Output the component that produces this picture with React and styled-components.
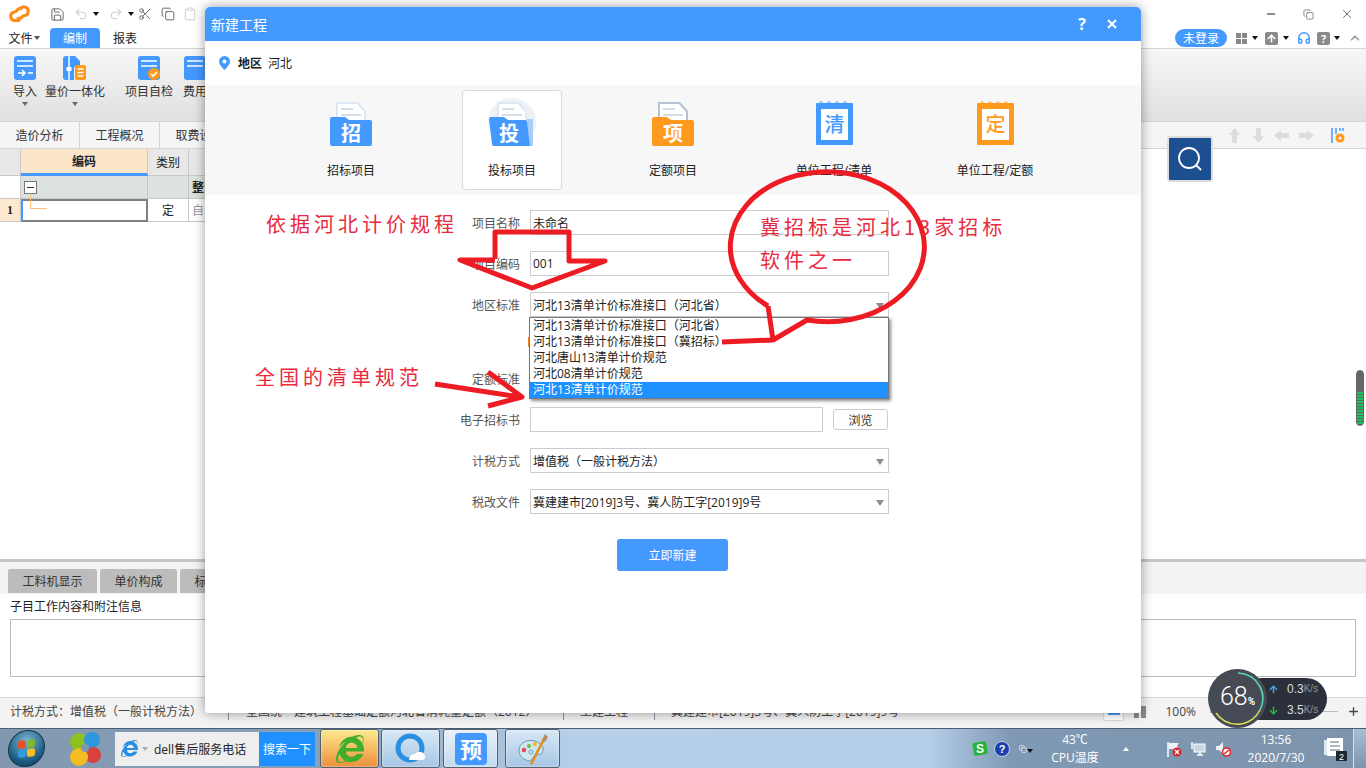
import React from 'react'
import styled, { createGlobalStyle } from 'styled-components'
import { Save, Undo2, Redo2, Scissors, Copy, Clipboard, Minus, X, ChevronUp, Headphones, ArrowUp, ArrowDown, Plus } from 'lucide-react'
import { FaInternetExplorer } from 'react-icons/fa'

const Global = createGlobalStyle`
html, body { margin: 0; padding: 0; width: 1366px; height: 768px; overflow: hidden; background: #fff; }
* { box-sizing: border-box; }
body { font-family: "Open Sans", "Noto Sans CJK SC", sans-serif; font-size: 12px; color: #222; }
`

const Shell = styled.div`
position: relative;
width: 1366px;
height: 768px;
display: flex;
flex-direction: column;
overflow: hidden;
`

const TitleBar = styled.div`
height: 28px;
display: flex;
align-items: center;
padding-left: 8px;
background: #fff;
color: #555;
`

const QuickIcon = styled.span`
display: inline-flex;
margin-left: ${p => p.$ml || 0}px;
color: ${p => p.$c || '#555'};
`

const Caret = styled.span`
display: inline-block;
width: 0;
height: 0;
margin-left: ${p => p.$ml || 0}px;
border-left: 3px solid transparent;
border-right: 3px solid transparent;
border-top: 4px solid ${p => p.$c || '#111'};
`

const CaretUp = styled(Caret)`
transform: rotate(180deg);
`

const WinButtons = styled.div`
margin-left: auto;
display: flex;
align-items: center;
gap: 26px;
padding-right: 12px;
color: #666;
`

const MenuRow = styled.div`
height: 21px;
display: flex;
align-items: stretch;
border-bottom: 1px solid #d5d5d5;
padding-left: 9px;
background: #fff;
`

const Menu = styled.div`
display: flex;
align-items: center;
justify-content: center;
white-space: nowrap;
width: ${p => p.$w}px;
margin-right: ${p => p.$mr || 0}px;
border-radius: 4px 4px 0 0;
background: ${p => (p.$on ? '#4499ff' : 'transparent')};
color: ${p => (p.$on ? '#fff' : '#222')};
`

const MenuRight = styled.div`
margin-left: auto;
display: flex;
align-items: center;
padding-right: 4px;
`

const Login = styled.div`
width: 52px;
height: 18px;
border-radius: 9px;
background: #4499ff;
color: #fff;
display: flex;
align-items: center;
justify-content: center;
margin-right: 9px;
`

const GrayTile = styled.span`
width: 13px;
height: 13px;
border-radius: 2px;
background: #8a8a8a;
color: #fff;
font-weight: 700;
font-size: 11px;
line-height: 13px;
text-align: center;
display: inline-flex;
align-items: center;
justify-content: center;
margin-left: ${p => p.$ml || 0}px;
`

const Ribbon = styled.div`
height: 73px;
display: flex;
align-items: flex-start;
padding-top: 7px;
border-bottom: 1px solid #d5d5d5;
background: linear-gradient(#f7f7f7, #e0e0e0);
`

const RibbonItem = styled.div`
width: ${p => p.$w}px;
margin-left: ${p => p.$ml}px;
display: flex;
flex-direction: column;
align-items: center;
gap: 2px;
color: #333;
white-space: nowrap;
`

const TabRow = styled.div`
height: 27px;
display: flex;
align-items: stretch;
border-bottom: 1px solid #d5d5d5;
background: #f5f5f5;
`

const DocTab = styled.div`
width: 80px;
display: flex;
align-items: center;
justify-content: center;
border-right: 1px solid #d5d5d5;
color: #333;
`

const TabTools = styled.div`
margin-left: auto;
display: flex;
align-items: center;
padding-right: 21px;
`

const MoveArrow = styled.svg`
margin-right: ${p => p.$mr}px;
`

const Gear = styled.svg`
margin-left: 3px;
`

const Main = styled.div`
height: 410px;
background: #fff;
`

const Table = styled.div`
display: grid;
grid-template-columns: 21px 127px 41px 200px;
grid-template-rows: 27px 23px 23px;
width: 389px;
`

const Cell = styled.div`
display: flex;
align-items: center;
justify-content: ${p => p.$left ? 'flex-start' : 'center'};
padding-left: ${p => p.$left ? 3 : 0}px;
background: ${p => p.$bg || '#fff'};
border-right: 1px solid #c8c8c8;
border-bottom: 1px solid #c8c8c8;
font-weight: ${p => (p.$bold ? 700 : 400)};
color: ${p => p.$c || '#222'};
`

const HeadCode = styled(Cell)`
background: #fde5c9;
border-bottom: 3px solid #4499ff;
font-weight: 700;
`

const RowNo = styled(Cell)`
background: #fde9d0;
font-family: "Liberation Serif", serif;
font-weight: 700;
`

const SelectedCell = styled.div`
position: relative;
border: 2px solid #808080;
border-left-color: #4499ff;
background: #fff;
`

const TreeLine = styled.span`
position: absolute;
left: 7px;
top: -6px;
width: 17px;
height: 14px;
border-left: 1px solid #fdbf78;
border-bottom: 1px solid #fdbf78;
`

const Collapse = styled.span`
width: 13px;
height: 13px;
border: 1px solid #777;
background: #fff;
display: inline-flex;
align-items: center;
justify-content: center;
&::after { content: ''; width: 7px; height: 1px; background: #333; }
`

const Splitter = styled.div`
height: 3px;
background: #c6c6c6;
`

const LowerTabs = styled.div`
height: 32px;
display: flex;
align-items: flex-end;
gap: 3px;
padding: 0 0 1px 8px;
background: #f3f3f3;
`

const LowerTab = styled.div`
width: ${p => p.$w}px;
height: 24px;
border-radius: 2px 2px 0 0;
background: #bcbcbc;
color: #333;
display: flex;
align-items: center;
justify-content: center;
`

const Lower = styled.div`
height: 103px;
padding: 5px 10px 0;
background: #fff;
`

const LowerLabel = styled.div`
height: 20px;
line-height: 15px;
`

const NoteBox = styled.div`
height: 58px;
border: 1px solid #bbb;
`

const Status = styled.div`
height: 31px;
display: flex;
align-items: center;
border-top: 1px solid #d5d5d5;
padding-bottom: 3px;
background: #f3f3f3;
color: #444;
white-space: nowrap;
`

const StatusCell = styled.div`
width: ${p => p.$w}px;
padding-left: ${p => p.$pl}px;
height: 16px;
line-height: 16px;
border-right: ${p => (p.$last ? 0 : '1px solid #8c98a6')};
`

const StatusRight = styled.div`
margin-left: auto;
display: flex;
align-items: center;
padding-right: 6px;
`

const ViewBtn = styled.div`
width: 21px;
height: 18px;
background: #fff;
border: 1px solid #d8d8d8;
border-radius: 2px;
display: flex;
align-items: center;
justify-content: center;
&::after { content: ''; width: 12px; height: 6px; background: #4499ff; border-radius: 1px; }
`

const ColsIcon = styled.svg`
margin: 0 18px 0 10px;
`

const ZoomMinus = styled(Minus)`
margin-left: 12px;
`

const ZoomLine = styled.div`
width: 108px;
height: 1px;
margin: 0 9px 0 10px;
background: #bbb;
`

const Taskbar = styled.div`
height: 40px;
display: flex;
align-items: center;
border-top: 1px solid #4a5d72;
background: linear-gradient(90deg, #8198b0 0, #86a0ba 23%, #b6d0ea 42%, #b5cfe9 68%, #7f99b4 74%, #7d94ac 100%);
`

const Orb = styled.div`
width: 37px;
height: 37px;
margin-left: 8px;
border-radius: 50%;
border: 1px solid #16384f;
background: radial-gradient(circle at 50% 30%, #7fb6d6, #1b5d83 65%, #0e3048);
display: grid;
grid-template-columns: 8px 8px;
grid-template-rows: 8px 8px;
gap: 1px;
justify-content: center;
align-content: center;
transform: skewY(-6deg);
`

const OrbPane = styled.span`
background: ${p => p.$c};
border-radius: 2px;
`

const SearchBar = styled.div`
width: 200px;
height: 34px;
margin-left: 14px;
display: flex;
align-items: center;
background: #eeeeee;
color: #222;
`

const SearchBtn = styled.div`
margin-left: auto;
width: 56px;
height: 100%;
background: #1e90ff;
color: #fff;
display: flex;
align-items: center;
justify-content: center;
`

const TaskBtn = styled.div`
width: ${p => p.$w}px;
height: 39px;
margin-left: ${p => p.$ml}px;
border: 1px solid #51606f;
border-radius: 3px;
display: flex;
align-items: center;
justify-content: center;
background: ${p => p.$bg};
box-shadow: inset 0 0 2px #fff;
`

const Tray = styled.div`
margin-left: auto;
display: flex;
align-items: center;
height: 100%;
color: #fff;
`

const TrayText = styled.div`
width: ${p => p.$w}px;
margin-left: ${p => p.$ml}px;
text-align: center;
line-height: 18px;
white-space: nowrap;
`

const TraySlot = styled.span`
display: inline-flex;
margin-left: ${p => p.$ml}px;
`

const ShowDesktop = styled.div`
width: 13px;
height: 100%;
margin-left: 6px;
background: linear-gradient(#a9bfd4, #7d94ac);
border-left: 1px solid #d5e0ea;
`

const Modal = styled.div`
position: absolute;
left: 205px;
top: 7px;
width: 936px;
height: 706px;
background: #fff;
border-radius: 5px 5px 3px 3px;
box-shadow: 0 0 12px rgba(0, 0, 0, .4);
display: flex;
flex-direction: column;
`

const ModalHead = styled.div`
height: 34px;
flex: none;
display: flex;
align-items: center;
padding: 0 22px 0 6px;
background: #4499ff;
border-radius: 5px 5px 0 0;
color: #fff;
font-size: 14px;
`

const HeadTools = styled.div`
margin-left: auto;
display: flex;
align-items: center;
gap: 19px;
font-size: 16px;
font-weight: 700;
`

const Location = styled.div`
height: 44px;
flex: none;
display: flex;
align-items: center;
padding-left: 14px;
gap: 6px;
`

const Bold = styled.b`
margin-left: 2px;
font-weight: 700;
`

const Band = styled.div`
height: 110px;
flex: none;
display: flex;
justify-content: center;
align-items: center;
gap: 61px;
background: #f7f7f7;
`

const TypeCard = styled.div`
width: 100px;
height: 100px;
padding-top: 7px;
display: flex;
flex-direction: column;
align-items: center;
gap: 14px;
line-height: 17px;
white-space: nowrap;
border: 1px solid ${p => (p.$on ? '#d5dbe0' : 'transparent')};
border-radius: 3px;
background: ${p => (p.$on ? '#fff' : 'transparent')};
`

const Form = styled.div`
position: relative;
padding: 15px 0 0 225px;
display: flex;
flex-direction: column;
gap: 16px;
`

const Row = styled.div`
display: flex;
align-items: center;
height: ${p => p.$h || 25}px;
`

const Label = styled.div`
width: 90px;
margin-right: 10px;
text-align: right;
color: #555;
`

const Field = styled.div`
position: relative;
width: ${p => p.$w || 359}px;
height: 25px;
padding-left: 2px;
display: flex;
align-items: center;
border: 1px solid #ccc;
color: #222;
background: #fff;
white-space: nowrap;
`

const SelectArrow = styled.span`
position: absolute;
right: 4px;
top: 10px;
border-left: 4px solid transparent;
border-right: 4px solid transparent;
border-top: 6px solid #8c8c8c;
`

const HintMark = styled.div`
width: 2px;
height: 10px;
margin-left: 98px;
background: #f08c1e;
`

const Browse = styled.div`
width: 55px;
height: 21px;
margin-left: 10px;
border: 1px solid #ccc;
border-radius: 3px;
display: flex;
align-items: center;
justify-content: center;
color: #333;
`

const Dropdown = styled.div`
position: absolute;
left: 324px;
top: 122px;
width: 360px;
height: 82px;
background: #fff;
border: 1px solid #777;
box-shadow: 2px 2px 3px rgba(0, 0, 0, .45);
`

const Option = styled.div`
height: 16px;
line-height: 16px;
padding-left: 3px;
white-space: nowrap;
background: ${p => (p.$on ? '#1e90ff' : 'transparent')};
color: ${p => (p.$on ? '#fff' : '#222')};
`

const Submit = styled.div`
width: 111px;
height: 32px;
margin: 9px 0 0 187px;
border-radius: 3px;
background: #4499ff;
color: #fff;
display: flex;
align-items: center;
justify-content: center;
`

const Finder = styled.div`
position: absolute;
left: 1167px;
top: 136px;
width: 46px;
height: 46px;
border: 2px solid #dcdcdc;
border-radius: 3px;
background: #1c4f8f;
display: flex;
align-items: center;
justify-content: center;
`

const Meter = styled.div`
position: absolute;
left: 1356px;
top: 370px;
width: 8px;
height: 56px;
border-radius: 4px;
background: linear-gradient(#666 0 20px, transparent 20px), repeating-linear-gradient(#19c45a 0 2px, #666 2px 3px);
border: 1px solid #666;
`

const Speed = styled.div`
position: absolute;
left: 1240px;
top: 678px;
width: 87px;
height: 42px;
padding: 5px 0 0 28px;
border-radius: 21px;
background: #2c303a;
color: #d8dde2;
font-size: 12px;
display: flex;
flex-direction: column;
gap: 9px;
`

const SpeedRow = styled.div`
height: 12px;
line-height: 12px;
display: flex;
align-items: center;
white-space: nowrap;
font-family: "Liberation Sans", sans-serif;
`

const SpeedIcon = styled.span`
display: inline-flex;
width: 19px;
color: ${p => p.$c};
`

const SpeedUnit = styled.span`
color: #8e949c;
font-size: 10px;
`

const Gauge = styled.div`
position: absolute;
left: 1208px;
top: 669px;
width: 59px;
height: 59px;
border-radius: 50%;
background: #464a55;
color: #fff;
display: flex;
align-items: baseline;
justify-content: center;
padding-top: 13px;
font-family: Roboto, sans-serif;
font-size: 25px;
font-weight: 300;
line-height: 30px;
`

const GaugeRing = styled.svg`
position: absolute;
left: 0;
top: 0;
`

const Pct = styled.span`
font-size: 10px;
font-weight: 700;
`

const Ink = styled.svg`
position: absolute;
left: 0;
top: 0;
pointer-events: none;
`

const Note = styled.div`
position: absolute;
left: ${p => p.$x}px;
top: ${p => p.$y}px;
font-family: "Noto Sans CJK SC", sans-serif;
color: #ea2a3e;
font-size: 20px;
font-weight: 400;
line-height: 24px;
letter-spacing: 4px;
white-space: nowrap;
`

const RibbonDoc = ({ badge }) => (
  <svg width="24" height="24" viewBox="0 0 24 24">
    <rect x="1" y="0" width="22" height="24" rx="3" fill="#4499ff" />
    <path d="M4 5h16M4 10h16" stroke="#fff" strokeWidth="1.6" />
    {badge === 'arrow' && <path d="M5 17h7m-3-3 3 3-3 3M15 17h5" stroke="#fff" strokeWidth="1.6" fill="none" />}
    {badge === 'check' && (
      <g>
        <circle cx="17" cy="18" r="6" fill="#ff9a1f" />
        <path d="M14 18l2 2 4-4" stroke="#fff" strokeWidth="1.6" fill="none" />
      </g>
    )}
  </svg>
)

const RibbonLink = () => (
  <svg width="24" height="24" viewBox="0 0 24 24">
    <path d="M0 3q0-3 3-3h9l5 5v6H11v13H3q-3 0-3-3z" fill="#4499ff" />
    <path d="M6 0v24" stroke="#fff" strokeWidth="1.4" />
    <rect x="3.5" y="11" width="5" height="4" fill="#fff" />
    <rect x="12" y="9" width="11" height="15" rx="2" fill="#ff9a1f" />
    <path d="M14.5 13h6M14.5 16.500h6M14.500 20h6" stroke="#fff" strokeWidth="1.500" />
  </svg>
)

const TypeFolder = ({ color, back, ch, tilted }) => (
  <svg width="52" height="50" viewBox="0 0 52 50">
    {tilted && <circle cx="26" cy="24" r="24" fill="#eef1f5" />}
    <path d="M11 4h22l8 9v20H11z" fill={back === 'dark' ? '#b4c2d4' : '#dfe8f4'} />
    <path d="M13 6h19l7 8v19H13z" fill="#fff" />
    <path d="M16 11h12M16 17h20" stroke="#d3deeb" strokeWidth="2" />
    {tilted ? (
      <g>
        <path d="M41 21h6v27h-8z" fill="#a9cdfb" />
        <path d="M8 48q-2 0-2-2L3 21q0-2 2-2h13l4 3h17q2 0 2 2l3 24z" fill={color} />
      </g>
    ) : (
      <path d="M7 48q-2 0-2-2V21q0-2 2-2h13l4 3h21q2 0 2 2v22q0 2-2 2z" fill={color} />
    )}
    <text x={tilted ? 23 : 26} y="43" textAnchor="middle" fontSize="20" fontWeight="700" fill="#fff" fontFamily="Noto Sans CJK SC">{ch}</text>
  </svg>
)

const TypeBook = ({ color, ch }) => (
  <svg width="52" height="50" viewBox="0 0 52 50">
    <rect x="8" y="5" width="37" height="42" rx="1" fill={color} />
    {[13, 21, 29, 37].map(x => <circle key={x} cx={x} cy="5" r="2" fill={color} opacity=".5" />)}
    <rect x="13" y="11" width="27" height="31" fill="#fff" />
    <text x="26.500" y="34" textAnchor="middle" fontSize="20" fontWeight="500" fill={color} fontFamily="Noto Sans CJK SC">{ch}</text>
  </svg>
)

const Logo = () => (
  <svg width="23" height="18" viewBox="0 0 23 18" fill="none" stroke="#ff8c1a" strokeWidth="3.200" strokeLinecap="round">
    <path d="M13 3.500C10 2 9 7 6.500 7c-5 0-5 8.500 0 8.500H11" />
    <path d="M10 13.500c3 1.500 4-3 6.500-3 5 0 5-8.500 0-8.500H14" />
  </svg>
)

const Palette = () => (
  <svg width="34" height="32" viewBox="0 0 34 32">
    <path d="M3 17c0-7 8-11 16-9 7 2 10 8 7 12-2 3-6 0-8 3-2 4-4 6-8 4-5-2-7-5-7-10z" fill="#cfe5f0" stroke="#6a9cb5" />
    <circle cx="8" cy="17" r="2.200" fill="#e5484d" />
    <circle cx="13" cy="13" r="2" fill="#6dbb45" />
    <circle cx="19" cy="11" r="2" fill="#f5b51e" />
    <circle cx="15" cy="19" r="2" fill="none" stroke="#5d9fc7" />
    <path d="M15 31 28 6" stroke="#e58a1f" strokeWidth="2.500" />
    <path d="M26 7l3-6 3 3-3 5z" fill="#b58d5f" />
  </svg>
)

const ColorOrb = () => (
  <svg width="32" height="36" viewBox="0 0 32 36">
    <circle cx="10" cy="11" r="9" fill="#8cc21f" />
    <circle cx="23" cy="9" r="8" fill="#2f95dc" />
    <circle cx="24" cy="24" r="8" fill="#d8413d" />
    <circle cx="10" cy="26" r="9" fill="#f4be22" />
    <circle cx="16" cy="17" r="4" fill="#8198b0" />
  </svg>
)

const Flag = () => (
  <svg width="16" height="16" viewBox="0 0 16 16">
    <path d="M2 1v15" stroke="#fff" strokeWidth="1.500" />
    <path d="M3 2h10l-2 3 2 3H3z" fill="#eef2f6" />
    <circle cx="11" cy="11" r="4.500" fill="#d9282f" />
    <path d="m9 9 4 4m0-4-4 4" stroke="#fff" strokeWidth="1.300" />
  </svg>
)

const Net = () => (
  <svg width="16" height="16" viewBox="0 0 16 16">
    <rect x="4" y="3" width="11" height="8" fill="#c8d6e3" stroke="#fff" />
    <path d="M7 14h6M10 11v3M2 1v7" stroke="#fff" strokeWidth="1.500" />
  </svg>
)

const Speaker = () => (
  <svg width="16" height="16" viewBox="0 0 16 16">
    <path d="M1 5h3l4-4v12L4 9H1z" fill="#eef2f6" />
    <circle cx="11.500" cy="11" r="4" fill="#fff" stroke="#d9282f" strokeWidth="1.600" />
    <path d="m9 13 5-4" stroke="#d9282f" strokeWidth="1.600" />
  </svg>
)

const HelpOrb = () => (
  <svg width="16" height="16" viewBox="0 0 16 16">
    <circle cx="8" cy="8" r="7.500" fill="#1a3fae" stroke="#c8d0da" />
    <text x="8" y="12" textAnchor="middle" fontSize="11" fontWeight="700" fill="#fff" fontFamily="Liberation Sans">?</text>
  </svg>
)

const Sogou = () => (
  <svg width="16" height="15" viewBox="0 0 16 15">
    <rect x="1" y="1" width="14" height="13" rx="2" fill="#23b53a" transform="rotate(-10 8 7)" />
    <text x="8" y="12" textAnchor="middle" fontSize="12" fontWeight="700" fill="#fff" fontFamily="Liberation Sans">S</text>
  </svg>
)

const Notify = () => (
  <svg width="24" height="24" viewBox="0 0 24 24">
    <rect x="1" y="3" width="4" height="15" fill="#dfe7ef" />
    <rect x="4" y="1" width="16" height="18" fill="#fff" />
    <path d="M7 5h9M7 9h10M7 13h10" stroke="#5b7188" strokeWidth="1.200" />
    <rect x="13" y="14" width="11" height="10" fill="#1f2730" />
    <text x="18.500" y="23" textAnchor="middle" fontSize="9" fill="#fff" fontFamily="Liberation Sans">2</text>
  </svg>
)

const options = ['河北13清单计价标准接口（河北省）', '河北13清单计价标准接口（冀招标）', '河北唐山13清单计价规范', '河北08清单计价规范', '河北13清单计价规范']

const App = () => (
  <Shell>
    <Global />
    <TitleBar>
      <Logo />
      <QuickIcon $ml={19}><Save size={15} strokeWidth={1.400} /></QuickIcon>
      <QuickIcon $ml={9} $c="#d0d0d0"><Undo2 size={14} /></QuickIcon>
      <Caret $ml={5} />
      <QuickIcon $ml={10} $c="#d0d0d0"><Redo2 size={14} /></QuickIcon>
      <Caret $ml={5} />
      <QuickIcon $ml={4}><Scissors size={14} strokeWidth={1.500} /></QuickIcon>
      <QuickIcon $ml={9}><Copy size={14} strokeWidth={1.500} /></QuickIcon>
      <QuickIcon $ml={8} $c="#d5d5d5"><Clipboard size={14} /></QuickIcon>
      <WinButtons>
        <Minus size={12} strokeWidth={3} />
        <Copy size={11} strokeWidth={1.600} />
        <X size={14} strokeWidth={1.600} />
      </WinButtons>
    </TitleBar>
    <MenuRow>
      <Menu $w={30} $mr={11}>文件<Caret $ml={1} $c="#555" /></Menu>
      <Menu $w={50} $mr={13} $on>编制</Menu>
      <Menu $w={24}>报表</Menu>
      <MenuRight>
        <Login>未登录</Login>
        <svg width="11" height="11" viewBox="0 0 11 11"><path d="M0 0h5v5H0zM6 0h5v5H6zM0 6h5v5H0zM6 6h5v5H6z" fill="#888" /></svg>
        <Caret $ml={5} />
        <GrayTile $ml={7}><ArrowUp size={11} strokeWidth={3.500} /></GrayTile>
        <Caret $ml={5} />
        <QuickIcon $ml={8} $c="#4499ff"><Headphones size={14} strokeWidth={2.500} /></QuickIcon>
        <GrayTile $ml={6}>?</GrayTile>
        <Caret $ml={4} />
        <QuickIcon $ml={8} $c="#999"><ChevronUp size={14} strokeWidth={2.500} /></QuickIcon>
      </MenuRight>
    </MenuRow>
    <Ribbon>
      <RibbonItem $w={24} $ml={13}>
        <RibbonDoc badge="arrow" />
        <span>导入</span>
        <Caret $ml={0} $c="#666" />
      </RibbonItem>
      <RibbonItem $w={60} $ml={8}>
        <RibbonLink />
        <span>量价一体化</span>
        <Caret $ml={0} $c="#666" />
      </RibbonItem>
      <RibbonItem $w={48} $ml={20}>
        <RibbonDoc badge="check" />
        <span>项目自检</span>
      </RibbonItem>
      <RibbonItem $w={24} $ml={10}>
        <RibbonDoc />
        <span>费用</span>
      </RibbonItem>
    </Ribbon>
    <TabRow>
      <DocTab>造价分析</DocTab>
      <DocTab>工程概况</DocTab>
      <DocTab>取费设置</DocTab>
      <TabTools>
        <MoveArrow $mr={13} width="11" height="15" viewBox="0 0 11 15"><path d="M5.500 0 11 7H8v8H3V7H0z" fill="#dcdcdc" /></MoveArrow>
        <MoveArrow $mr={10} width="11" height="15" viewBox="0 0 11 15"><path d="M5.500 15 11 8H8V0H3v8H0z" fill="#dcdcdc" /></MoveArrow>
        <MoveArrow $mr={10} width="15" height="11" viewBox="0 0 15 11"><path d="M0 5.500 7 0v3h8v5H7v3z" fill="#dcdcdc" /></MoveArrow>
        <MoveArrow $mr={14} width="15" height="11" viewBox="0 0 15 11"><path d="M15 5.500 8 0v3H0v5h8v3z" fill="#dcdcdc" /></MoveArrow>
        <Gear width="14" height="15" viewBox="0 0 14 15">
          <path d="M1 0v15M5 0v6M9 0v3M12 0v3" stroke="#4499ff" strokeWidth="1.500" />
          <circle cx="9" cy="10" r="4.500" fill="#ff9a1f" />
          <circle cx="9" cy="10" r="1.500" fill="#fff" />
        </Gear>
      </TabTools>
    </TabRow>
    <Main>
      <Table>
        <Cell $bg="#e8e8e8" />
        <HeadCode>编码</HeadCode>
        <Cell $bg="#e8e8e8">类别</Cell>
        <Cell $bg="#e8e8e8">名称</Cell>
        <Cell />
        <Cell $bg="#dce3de" $left><Collapse /></Cell>
        <Cell $bg="#dce3de" />
        <Cell $bg="#dce3de" $left $bold>整个项目</Cell>
        <RowNo>1</RowNo>
        <SelectedCell><TreeLine /></SelectedCell>
        <Cell>定</Cell>
        <Cell $left $c="#999">自动提示</Cell>
      </Table>
    </Main>
    <Splitter />
    <LowerTabs>
      <LowerTab $w={89}>工料机显示</LowerTab>
      <LowerTab $w={77}>单价构成</LowerTab>
      <LowerTab $w={77}>标准换算</LowerTab>
    </LowerTabs>
    <Lower>
      <LowerLabel>子目工作内容和附注信息</LowerLabel>
      <NoteBox />
    </Lower>
    <Status>
      <StatusCell $w={229} $pl={10}>计税方式：增值税（一般计税方法）</StatusCell>
      <StatusCell $w={335} $pl={17}>全国统一建筑工程基础定额河北省消耗量定额（2012）</StatusCell>
      <StatusCell $w={91} $pl={16}>土建工程</StatusCell>
      <StatusCell $w={260} $pl={16} $last>冀建建市[2019]3号、冀人防工字[2019]9号</StatusCell>
      <StatusRight>
        <ViewBtn />
        <ColsIcon width="13" height="12" viewBox="0 0 13 12"><path d="M0 4h5v8H0zM7 0h5v12H7z" fill="#8a8a8a" /></ColsIcon>
        <span>100%</span>
        <ZoomMinus size={12} />
        <ZoomLine />
        <Plus size={13} strokeWidth={2.500} />
      </StatusRight>
    </Status>
    <Taskbar>
      <Orb>
        <OrbPane $c="#e8502a" />
        <OrbPane $c="#7fba2c" />
        <OrbPane $c="#2f9ae0" />
        <OrbPane $c="#f5bf22" />
      </Orb>
      <TraySlot $ml={24}><ColorOrb /></TraySlot>
      <SearchBar>
        <TraySlot $ml={6}><FaInternetExplorer size={17} color="#2a8fe0" /></TraySlot>
        <TraySlot $ml={4}><Caret $c="#aaa" /></TraySlot>
        <TraySlot $ml={6}>dell售后服务电话</TraySlot>
        <SearchBtn>搜索一下</SearchBtn>
      </SearchBar>
      <TaskBtn $w={59} $ml={5} $bg="linear-gradient(#fbe98d, #ee8f3c)"><FaInternetExplorer size={28} color="#3fae2a" /></TaskBtn>
      <TaskBtn $w={59} $ml={2} $bg="linear-gradient(#d8e8f6, #a7c6e4)">
        <svg width="32" height="32" viewBox="0 0 32 32"><circle cx="15" cy="15" r="12" fill="none" stroke="#2a8fe0" strokeWidth="5" /><path d="M14 27q0-6 6-6 2-3 6-2 4 1 4 5 0 3-3 3z" fill="#fff" /></svg>
      </TaskBtn>
      <TaskBtn $w={55} $ml={3} $bg="linear-gradient(#e8f1fa, #c4d9ee)">
        <svg width="32" height="32" viewBox="0 0 32 32"><rect width="32" height="32" rx="4" fill="#4499ff" /><text x="16" y="25" textAnchor="middle" fontSize="22" fontWeight="700" fill="#fff" fontFamily="Noto Sans CJK SC">预</text></svg>
      </TaskBtn>
      <TaskBtn $w={55} $ml={7} $bg="linear-gradient(#d8e8f6, #a7c6e4)"><Palette /></TaskBtn>
      <Tray>
        <Sogou />
        <TraySlot $ml={6}><HelpOrb /></TraySlot>
        <TrayText $w={14} $ml={9}>
          <Copy size={8} />
          <Caret />
        </TrayText>
        <TrayText $w={60} $ml={12}>43℃<br />CPU温度</TrayText>
        <TraySlot $ml={18}><CaretUp $c="#fff" /></TraySlot>
        <TraySlot $ml={37}><Flag /></TraySlot>
        <TraySlot $ml={8}><Net /></TraySlot>
        <TraySlot $ml={9}><Speaker /></TraySlot>
        <TrayText $w={70} $ml={10}>13:56<br />2020/7/30</TrayText>
        <TraySlot $ml={12}><Notify /></TraySlot>
        <ShowDesktop />
      </Tray>
    </Taskbar>

    <Finder>
      <svg width="30" height="30" viewBox="0 0 30 30" fill="none" stroke="#fff" strokeWidth="1.800">
        <circle cx="14" cy="14" r="10" />
        <path d="m21 21 5 5" />
      </svg>
    </Finder>
    <Meter />

    <Modal>
      <ModalHead>
        新建工程
        <HeadTools>
          <span>?</span>
          <X size={14} strokeWidth={3.500} />
        </HeadTools>
      </ModalHead>
      <Location>
        <svg width="11" height="14" viewBox="0 0 11 14"><path d="M5.500 0a5.500 5.500 0 0 1 5.500 5.500C11 9 5.500 14 5.500 14S0 9 0 5.500A5.500 5.500 0 0 1 5.500 0z" fill="#4499ff" /><circle cx="5.500" cy="5.500" r="2" fill="#fff" /></svg>
        <Bold>地区</Bold>
        <span>河北</span>
      </Location>
      <Band>
        <TypeCard><TypeFolder color="#4499ff" ch="招" /><span>招标项目</span></TypeCard>
        <TypeCard $on><TypeFolder color="#4499ff" ch="投" tilted /><span>投标项目</span></TypeCard>
        <TypeCard><TypeFolder color="#ff9a1f" back="dark" ch="项" /><span>定额项目</span></TypeCard>
        <TypeCard><TypeBook color="#4499ff" ch="清" /><span>单位工程/清单</span></TypeCard>
        <TypeCard><TypeBook color="#ff9a1f" ch="定" /><span>单位工程/定额</span></TypeCard>
      </Band>
      <Form>
        <Row><Label>项目名称</Label><Field>未命名</Field></Row>
        <Row><Label>项目编码</Label><Field>001</Field></Row>
        <Row><Label>地区标准</Label><Field>河北13清单计价标准接口（河北省）<SelectArrow /></Field></Row>
        <Row $h={17}><HintMark /></Row>
        <Row><Label>定额标准</Label><Field><SelectArrow /></Field></Row>
        <Row><Label>电子招标书</Label><Field $w={293} /><Browse>浏览</Browse></Row>
        <Row><Label>计税方式</Label><Field>增值税（一般计税方法）<SelectArrow /></Field></Row>
        <Row><Label>税改文件</Label><Field>冀建建市[2019]3号、冀人防工字[2019]9号<SelectArrow /></Field></Row>
        <Submit>立即新建</Submit>
        <Dropdown>
          {options.map((o, i) => <Option key={o} $on={i === 4}>{o}</Option>)}
        </Dropdown>
      </Form>
    </Modal>

    <Speed>
      <SpeedRow><SpeedIcon $c="#4aa8e8"><ArrowUp size={11} strokeWidth={3} /></SpeedIcon>0.3<SpeedUnit>K/s</SpeedUnit></SpeedRow>
      <SpeedRow><SpeedIcon $c="#2fb84a"><ArrowDown size={11} strokeWidth={3} /></SpeedIcon>3.5<SpeedUnit>K/s</SpeedUnit></SpeedRow>
    </Speed>
    <Gauge>
      <GaugeRing width="59" height="59" viewBox="0 0 59 59" fill="none" strokeWidth="1.600">
        <path d="M30 4A25.500 25.500 0 0 1 52 41" stroke="#58d6b0" />
        <path d="M52 41A25.500 25.500 0 0 1 8 44" stroke="#d8d85a" />
      </GaugeRing>
      68<Pct>%</Pct>
    </Gauge>

    <Ink width="1366" height="768" viewBox="0 0 1366 768" fill="none" stroke="#ed1c24" strokeWidth="5" strokeLinejoin="round">
      <path d="M495 259V232H569V261H605L532 288L460 260H495" />
      <path d="M435 384L520 397M488 372L522 397L488 406" />
      <path d="M768 306A97 75 0 1 1 807 320L773 340L768 306M722 342L773 340" />
    </Ink>
    <Note $x={266} $y={212}>依据河北计价规程</Note>
    <Note $x={255} $y={365}>全国的清单规范</Note>
    <Note $x={760} $y={215}>冀招标是河北13家招标</Note>
    <Note $x={760} $y={248}>软件之一</Note>
  </Shell>
)

export default App
